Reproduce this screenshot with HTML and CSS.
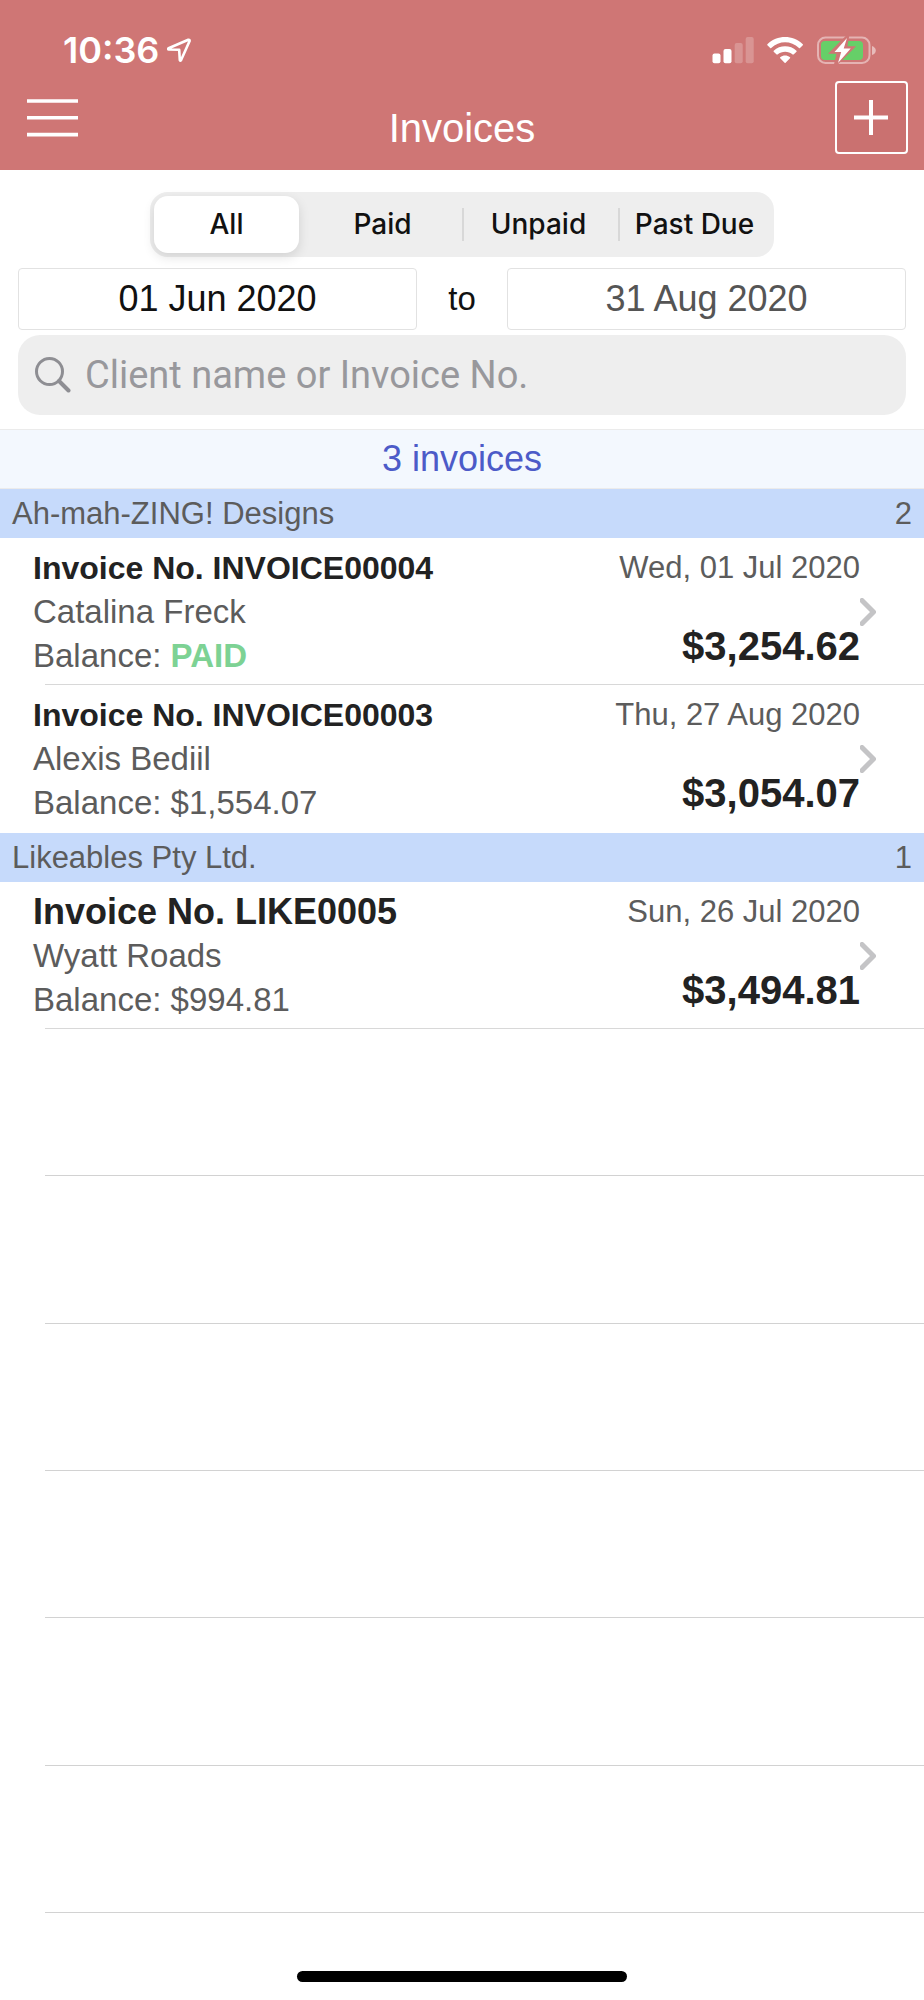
FILE: index.html
```html
<!DOCTYPE html>
<html lang="en">
<head>
<meta charset="utf-8">
<meta name="viewport" content="width=device-width, initial-scale=1">
<title>Invoices</title>
<link rel="stylesheet" href="styles.css">
</head>
<body>
<div class="app">
  <header class="header">
    <div class="status">
      <div class="status-left">
        <span class="time">10:36</span>
        <svg class="location" viewBox="0 0 24 24" width="24" height="24" aria-hidden="true">
          <path d="M21.3 1.8 1.6 10.2Q.6 11.2 1.8 11.5L12.2 11.8 12.8 22Q13.2 23.2 14 22.2L22.6 3Q22.8 1.3 21.3 1.8Z" fill="none" stroke="#fff" stroke-width="2.6" stroke-linejoin="round"/>
        </svg>
      </div>
      <svg class="indicators" viewBox="711 36 166 28" width="166" height="28" role="img" aria-label="Signal, Wi-Fi and battery">
        <g fill="#fff">
          <rect x="712.5" y="53.5" width="8" height="9.8" rx="2"/>
          <rect x="723.5" y="49" width="8" height="14.3" rx="2"/>
          <g opacity=".22">
            <rect x="734.7" y="43" width="8" height="20.3" rx="2"/>
            <rect x="745.7" y="37" width="8" height="26.3" rx="2"/>
          </g>
          <path d="M767.4 44.2C777 34.7 793 34.7 802.8 44.2Q803.2 44.7 802.8 45.2L800 48Q799.5 48.4 799 48C791 40.2 779.2 40.2 771.2 48Q770.7 48.4 770.2 48L767.4 45.2Q767 44.7 767.4 44.2Z"/>
          <path d="M773.7 50.7C780 44.8 790.2 44.8 796.5 50.7Q796.9 51.2 796.5 51.7L793.6 54.4Q793.1 54.8 792.6 54.4C788.5 50.7 781.8 50.7 777.6 54.4Q777.1 54.8 776.6 54.4L773.7 51.7Q773.3 51.2 773.7 50.7Z"/>
          <path d="M780.2 57.2C783.2 54.9 787 54.9 790 57.2Q790.5 57.7 790 58.2L785.6 62.8Q785.1 63.2 784.6 62.8L780.2 58.2Q779.7 57.7 780.2 57.2Z"/>
          <path d="M872 46Q875.8 47.5 875.8 50.5Q875.8 53.5 872 55Z" opacity=".5"/>
        </g>
        <rect x="818" y="37.5" width="51.5" height="25.5" rx="7.5" fill="none" stroke="#fff" stroke-opacity=".45" stroke-width="2"/>
        <rect x="821" y="41" width="42" height="19" rx="4" fill="#66cf68"/>
        <path d="M848 35.5 831 52.5H838L835 65.5 853 47.5H846Z" fill="#cf7675" stroke="#cf7675" stroke-width="2.5"/>
        <path d="M847 38 834.5 52H841.2L838 63 850.7 48.5H843.7Z" fill="#fff"/>
      </svg>
    </div>
    <div class="nav">
      <button class="menu" type="button" aria-label="Menu">
        <svg viewBox="0 0 52 38" width="52" height="38" aria-hidden="true"><path d="M0 2H51M0 18.8H51M0 35.6H51" stroke="#fff" stroke-width="3.6"/></svg>
      </button>
      <h1 class="title">Invoices</h1>
      <button class="add" type="button" aria-label="Add invoice">
        <svg viewBox="0 0 35 35" width="35" height="35" aria-hidden="true"><path d="M17 0V35M0 17.5H34" stroke="#fff" stroke-width="4"/></svg>
      </button>
    </div>
  </header>

  <main class="content">
    <form class="filters">
      <div class="segments" role="radiogroup" aria-label="Status">
        <label class="segment"><input type="radio" name="status" checked><span>All</span></label>
        <label class="segment"><input type="radio" name="status"><span>Paid</span></label>
        <label class="segment divided"><input type="radio" name="status"><span>Unpaid</span></label>
        <label class="segment divided"><input type="radio" name="status"><span>Past Due</span></label>
      </div>
      <div class="range">
        <input class="date" id="from" type="text" value="01 Jun 2020" aria-label="From date">
        <label class="to" for="until">to</label>
        <input class="date date-end" id="until" type="text" value="31 Aug 2020">
      </div>
      <label class="search">
        <svg viewBox="0 0 36 36" width="36" height="36" aria-hidden="true"><circle cx="14.5" cy="14.5" r="13" fill="none" stroke="#8e8e93" stroke-width="3"/><path d="M24 24 33.5 33.5" stroke="#8e8e93" stroke-width="4" stroke-linecap="round"/></svg>
        <input type="search" placeholder="Client name or Invoice No." aria-label="Search invoices">
      </label>
    </form>

    <p class="count">3 invoices</p>

    <section>
      <h2 class="group"><span>Ah-mah-ZING! Designs</span><span>2</span></h2>
      <a class="invoice" href="#INVOICE00004">
        <div class="details">
          <h3 class="number">Invoice No. INVOICE00004</h3>
          <p>Catalina Freck</p>
          <p>Balance: <strong class="paid">PAID</strong></p>
        </div>
        <div class="totals">
          <p class="day">Wed, 01 Jul 2020</p>
          <p class="amount">$3,254.62</p>
        </div>
        <svg class="chevron" viewBox="0 0 16 28" width="16" height="28" aria-hidden="true"><path d="M2 2.5 13.5 14 2 25.5"/></svg>
      </a>
      <a class="invoice last" href="#INVOICE00003">
        <div class="details">
          <h3 class="number">Invoice No. INVOICE00003</h3>
          <p>Alexis Bediil</p>
          <p>Balance: $1,554.07</p>
        </div>
        <div class="totals">
          <p class="day">Thu, 27 Aug 2020</p>
          <p class="amount">$3,054.07</p>
        </div>
        <svg class="chevron" viewBox="0 0 16 28" width="16" height="28" aria-hidden="true"><path d="M2 2.5 13.5 14 2 25.5"/></svg>
      </a>
    </section>

    <section>
      <h2 class="group"><span>Likeables Pty Ltd.</span><span>1</span></h2>
      <a class="invoice" href="#LIKE0005">
        <div class="details">
          <h3 class="number number-large">Invoice No. LIKE0005</h3>
          <p>Wyatt Roads</p>
          <p>Balance: $994.81</p>
        </div>
        <div class="totals">
          <p class="day">Sun, 26 Jul 2020</p>
          <p class="amount">$3,494.81</p>
        </div>
        <svg class="chevron" viewBox="0 0 16 28" width="16" height="28" aria-hidden="true"><path d="M2 2.5 13.5 14 2 25.5"/></svg>
      </a>
    </section>

    <div class="blank-rows" aria-hidden="true">
      <div></div><div></div><div></div><div></div><div></div><div></div>
    </div>
  </main>

  <footer class="home"><div class="home-bar"></div></footer>
</div>
</body>
</html>
```
FILE: styles.css
```css
* {
  box-sizing: border-box;
}

body {
  margin: 0;
  background: #fff;
  color: #5c5c5c;
  font-family: "Liberation Sans", Arial, sans-serif;
  font-size: 33px;
}

h1, h2, h3, p {
  margin: 0;
}

button {
  display: flex;
  align-items: center;
  justify-content: center;
  padding: 0;
  border: 0;
  background: none;
}

.app {
  display: flex;
  flex-direction: column;
  min-height: 100vh;
}

/* Header */
.header {
  padding-bottom: 16px;
  background: #cf7675;
  color: #fff;
}

.status {
  display: flex;
  justify-content: space-between;
  height: 81px;
  padding: 36px 47px 0 63px;
}

.status-left {
  display: flex;
  gap: 8px;
}

.time {
  font: 600 36px/28px Inter, sans-serif;
}

.location {
  margin-top: 2px;
}

.nav {
  display: grid;
  grid-template-columns: 1fr auto 1fr;
  align-items: center;
  padding: 0 16px 0 27px;
}

.title {
  padding: 20px 11px 0 0;
  font-size: 40px;
  font-weight: 400;
  line-height: 46px;
}

.menu {
  justify-self: start;
}

.add {
  justify-self: end;
  width: 73px;
  height: 73px;
  border: 2px solid #fff;
  border-radius: 4px;
  background: #ca7170;
}

/* Filters */
.content {
  display: flex;
  flex: 1;
  flex-direction: column;
}

.filters {
  padding: 22px 18px 14px;
}

.segments {
  display: grid;
  grid-template-columns: repeat(4, 1fr);
  max-width: 624px;
  height: 65px;
  margin: 0 auto 11px;
  border-radius: 18px;
  background: #eee;
}

.segment {
  position: relative;
  display: flex;
  padding: 4px 7px 4px 4px;
}

.segment input {
  position: absolute;
  opacity: 0;
}

.segment span {
  flex: 1;
  border-radius: 14px;
  color: #111;
  font: 500 28px/56px Inter, sans-serif;
  text-align: center;
  white-space: nowrap;
}

.segment input:checked + span {
  background: #fff;
  box-shadow: 0 4px 12px rgba(0, 0, 0, .12);
}

.divided {
  background: linear-gradient(#d8d8d8, #d8d8d8) 0 50% / 2px 33px no-repeat;
}

.range {
  display: grid;
  grid-template-columns: 1fr 90px 1fr;
  align-items: center;
  margin-bottom: 5px;
}

.date {
  width: 100%;
  height: 62px;
  padding: 0;
  border: 1px solid #e2e2e2;
  border-radius: 4px;
  background: #fff;
  color: #111;
  font: 36px "Liberation Sans", Arial, sans-serif;
  text-align: center;
}

.date-end {
  color: #555;
}

.to {
  color: #111;
  font-size: 33px;
  text-align: center;
}

.search {
  display: flex;
  align-items: center;
  gap: 14px;
  height: 80px;
  padding: 0 17px;
  border-radius: 22px;
  background: #eee;
}

.search input {
  flex: 1;
  min-width: 0;
  padding: 0;
  border: 0;
  background: none;
  font: 38px Roboto, sans-serif;
}

.search input::placeholder {
  color: #98989c;
}

/* Invoice list */
.count {
  border: solid #ebebeb;
  border-width: 1px 0;
  background: #f3f8fe;
  color: #4c5bc8;
  font-size: 36px;
  line-height: 58px;
  text-align: center;
}

.group {
  display: flex;
  justify-content: space-between;
  padding: 0 12px;
  background: #c6dafb;
  font-size: 31px;
  font-weight: 400;
  line-height: 49px;
}

.invoice {
  display: flex;
  align-items: center;
  padding: 8px 48px 7px 33px;
  background: linear-gradient(#d8d8d8, #d8d8d8) 45px 100% / 100% 1px no-repeat;
  color: inherit;
  line-height: 44px;
  text-decoration: none;
}

.invoice.last {
  padding-bottom: 8px;
  background: none;
}

.details {
  flex: 1;
}

.number {
  color: #222;
  font-size: 32px;
}

.number-large {
  font-size: 36px;
}

.paid {
  color: #7dd294;
}

.totals {
  align-self: flex-start;
  text-align: right;
}

.day {
  font-size: 31px;
}

.amount {
  margin-top: 34px;
  color: #222;
  font-size: 40px;
  font-weight: 700;
}

.chevron {
  fill: none;
  stroke: #c4c4c6;
  stroke-linecap: round;
  stroke-linejoin: round;
  stroke-width: 5;
}

.blank-rows {
  display: flex;
  flex: 1;
  flex-direction: column;
  margin-left: 45px;
}

.blank-rows div {
  flex: 1;
  min-height: 44px;
  border-bottom: 1px solid #d2d2d2;
}

.home {
  display: flex;
  align-items: flex-end;
  justify-content: center;
  height: 87px;
  padding-bottom: 18px;
}

.home-bar {
  width: 330px;
  height: 11px;
  border-radius: 6px;
  background: #000;
}
```
